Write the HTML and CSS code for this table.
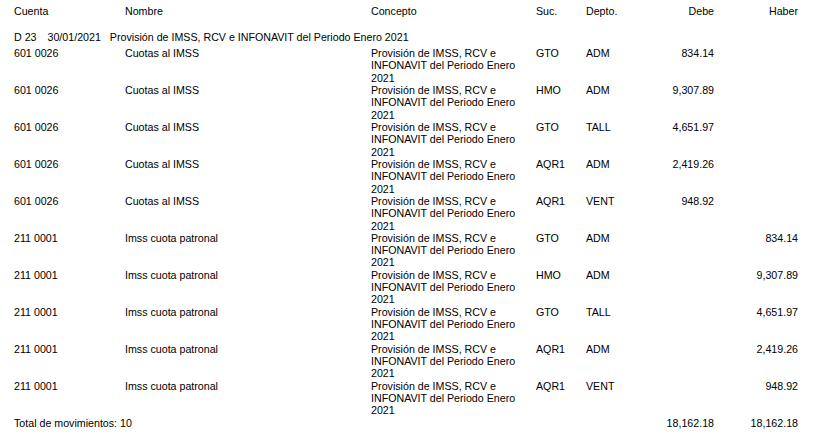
FILE: index.html
```html
<!DOCTYPE html>
<html lang="es">
<head>
<meta charset="utf-8">
<title>Póliza</title>
<link rel="stylesheet" href="styles.css">
</head>
<body>
<div class="report">
  <div class="row head">
    <div>Cuenta</div><div>Nombre</div><div>Concepto</div><div>Suc.</div><div>Depto.</div><div class="num">Debe</div><div class="num">Haber</div>
  </div>
  <div class="poliza"><span class="p1">D 23</span><span class="p2">30/01/2021</span><span>Provisión de IMSS, RCV e INFONAVIT del Periodo Enero 2021</span></div>
  <div class="rows">
    <div class="row item"><div>601 0026</div><div>Cuotas al IMSS</div><div class="concept">Provisión de IMSS, RCV e INFONAVIT del Periodo Enero 2021</div><div>GTO</div><div>ADM</div><div class="num">834.14</div><div class="num"></div></div>
    <div class="row item"><div>601 0026</div><div>Cuotas al IMSS</div><div class="concept">Provisión de IMSS, RCV e INFONAVIT del Periodo Enero 2021</div><div>HMO</div><div>ADM</div><div class="num">9,307.89</div><div class="num"></div></div>
    <div class="row item"><div>601 0026</div><div>Cuotas al IMSS</div><div class="concept">Provisión de IMSS, RCV e INFONAVIT del Periodo Enero 2021</div><div>GTO</div><div>TALL</div><div class="num">4,651.97</div><div class="num"></div></div>
    <div class="row item"><div>601 0026</div><div>Cuotas al IMSS</div><div class="concept">Provisión de IMSS, RCV e INFONAVIT del Periodo Enero 2021</div><div>AQR1</div><div>ADM</div><div class="num">2,419.26</div><div class="num"></div></div>
    <div class="row item"><div>601 0026</div><div>Cuotas al IMSS</div><div class="concept">Provisión de IMSS, RCV e INFONAVIT del Periodo Enero 2021</div><div>AQR1</div><div>VENT</div><div class="num">948.92</div><div class="num"></div></div>
    <div class="row item"><div>211 0001</div><div>Imss cuota patronal</div><div class="concept">Provisión de IMSS, RCV e INFONAVIT del Periodo Enero 2021</div><div>GTO</div><div>ADM</div><div class="num"></div><div class="num">834.14</div></div>
    <div class="row item"><div>211 0001</div><div>Imss cuota patronal</div><div class="concept">Provisión de IMSS, RCV e INFONAVIT del Periodo Enero 2021</div><div>HMO</div><div>ADM</div><div class="num"></div><div class="num">9,307.89</div></div>
    <div class="row item"><div>211 0001</div><div>Imss cuota patronal</div><div class="concept">Provisión de IMSS, RCV e INFONAVIT del Periodo Enero 2021</div><div>GTO</div><div>TALL</div><div class="num"></div><div class="num">4,651.97</div></div>
    <div class="row item"><div>211 0001</div><div>Imss cuota patronal</div><div class="concept">Provisión de IMSS, RCV e INFONAVIT del Periodo Enero 2021</div><div>AQR1</div><div>ADM</div><div class="num"></div><div class="num">2,419.26</div></div>
    <div class="row item"><div>211 0001</div><div>Imss cuota patronal</div><div class="concept">Provisión de IMSS, RCV e INFONAVIT del Periodo Enero 2021</div><div>AQR1</div><div>VENT</div><div class="num"></div><div class="num">948.92</div></div>
  </div>
  <div class="row total">
    <div class="total-label">Total de movimientos: 10</div><div class="num">18,162.18</div><div class="num">18,162.18</div>
  </div>
</div>
</body>
</html>
```

FILE: styles.css
```css
html, body {
  margin: 0;
  padding: 0;
  background: #ffffff;
}
body {
  font-family: "Liberation Sans", Arial, sans-serif;
  font-size: 10.667px;
  line-height: 12.3px;
  color: #000000;
}
.report {
  padding: 4.6px 18px 0 14px;
}
.row {
  display: grid;
  grid-template-columns: 111px 246px 165px 50px 60px 68px 84px;
}
.num {
  text-align: right;
}
.head {
  margin-bottom: 14px;
}
.poliza {
  display: flex;
  margin-bottom: 4px;
}
.p1 {
  margin-right: 11px;
}
.p2 {
  margin-right: 9px;
}
.item {
  height: 36.95px;
}
.concept {
  padding-right: 6px;
}
.total-label {
  grid-column: 1 / 6;
}
```
